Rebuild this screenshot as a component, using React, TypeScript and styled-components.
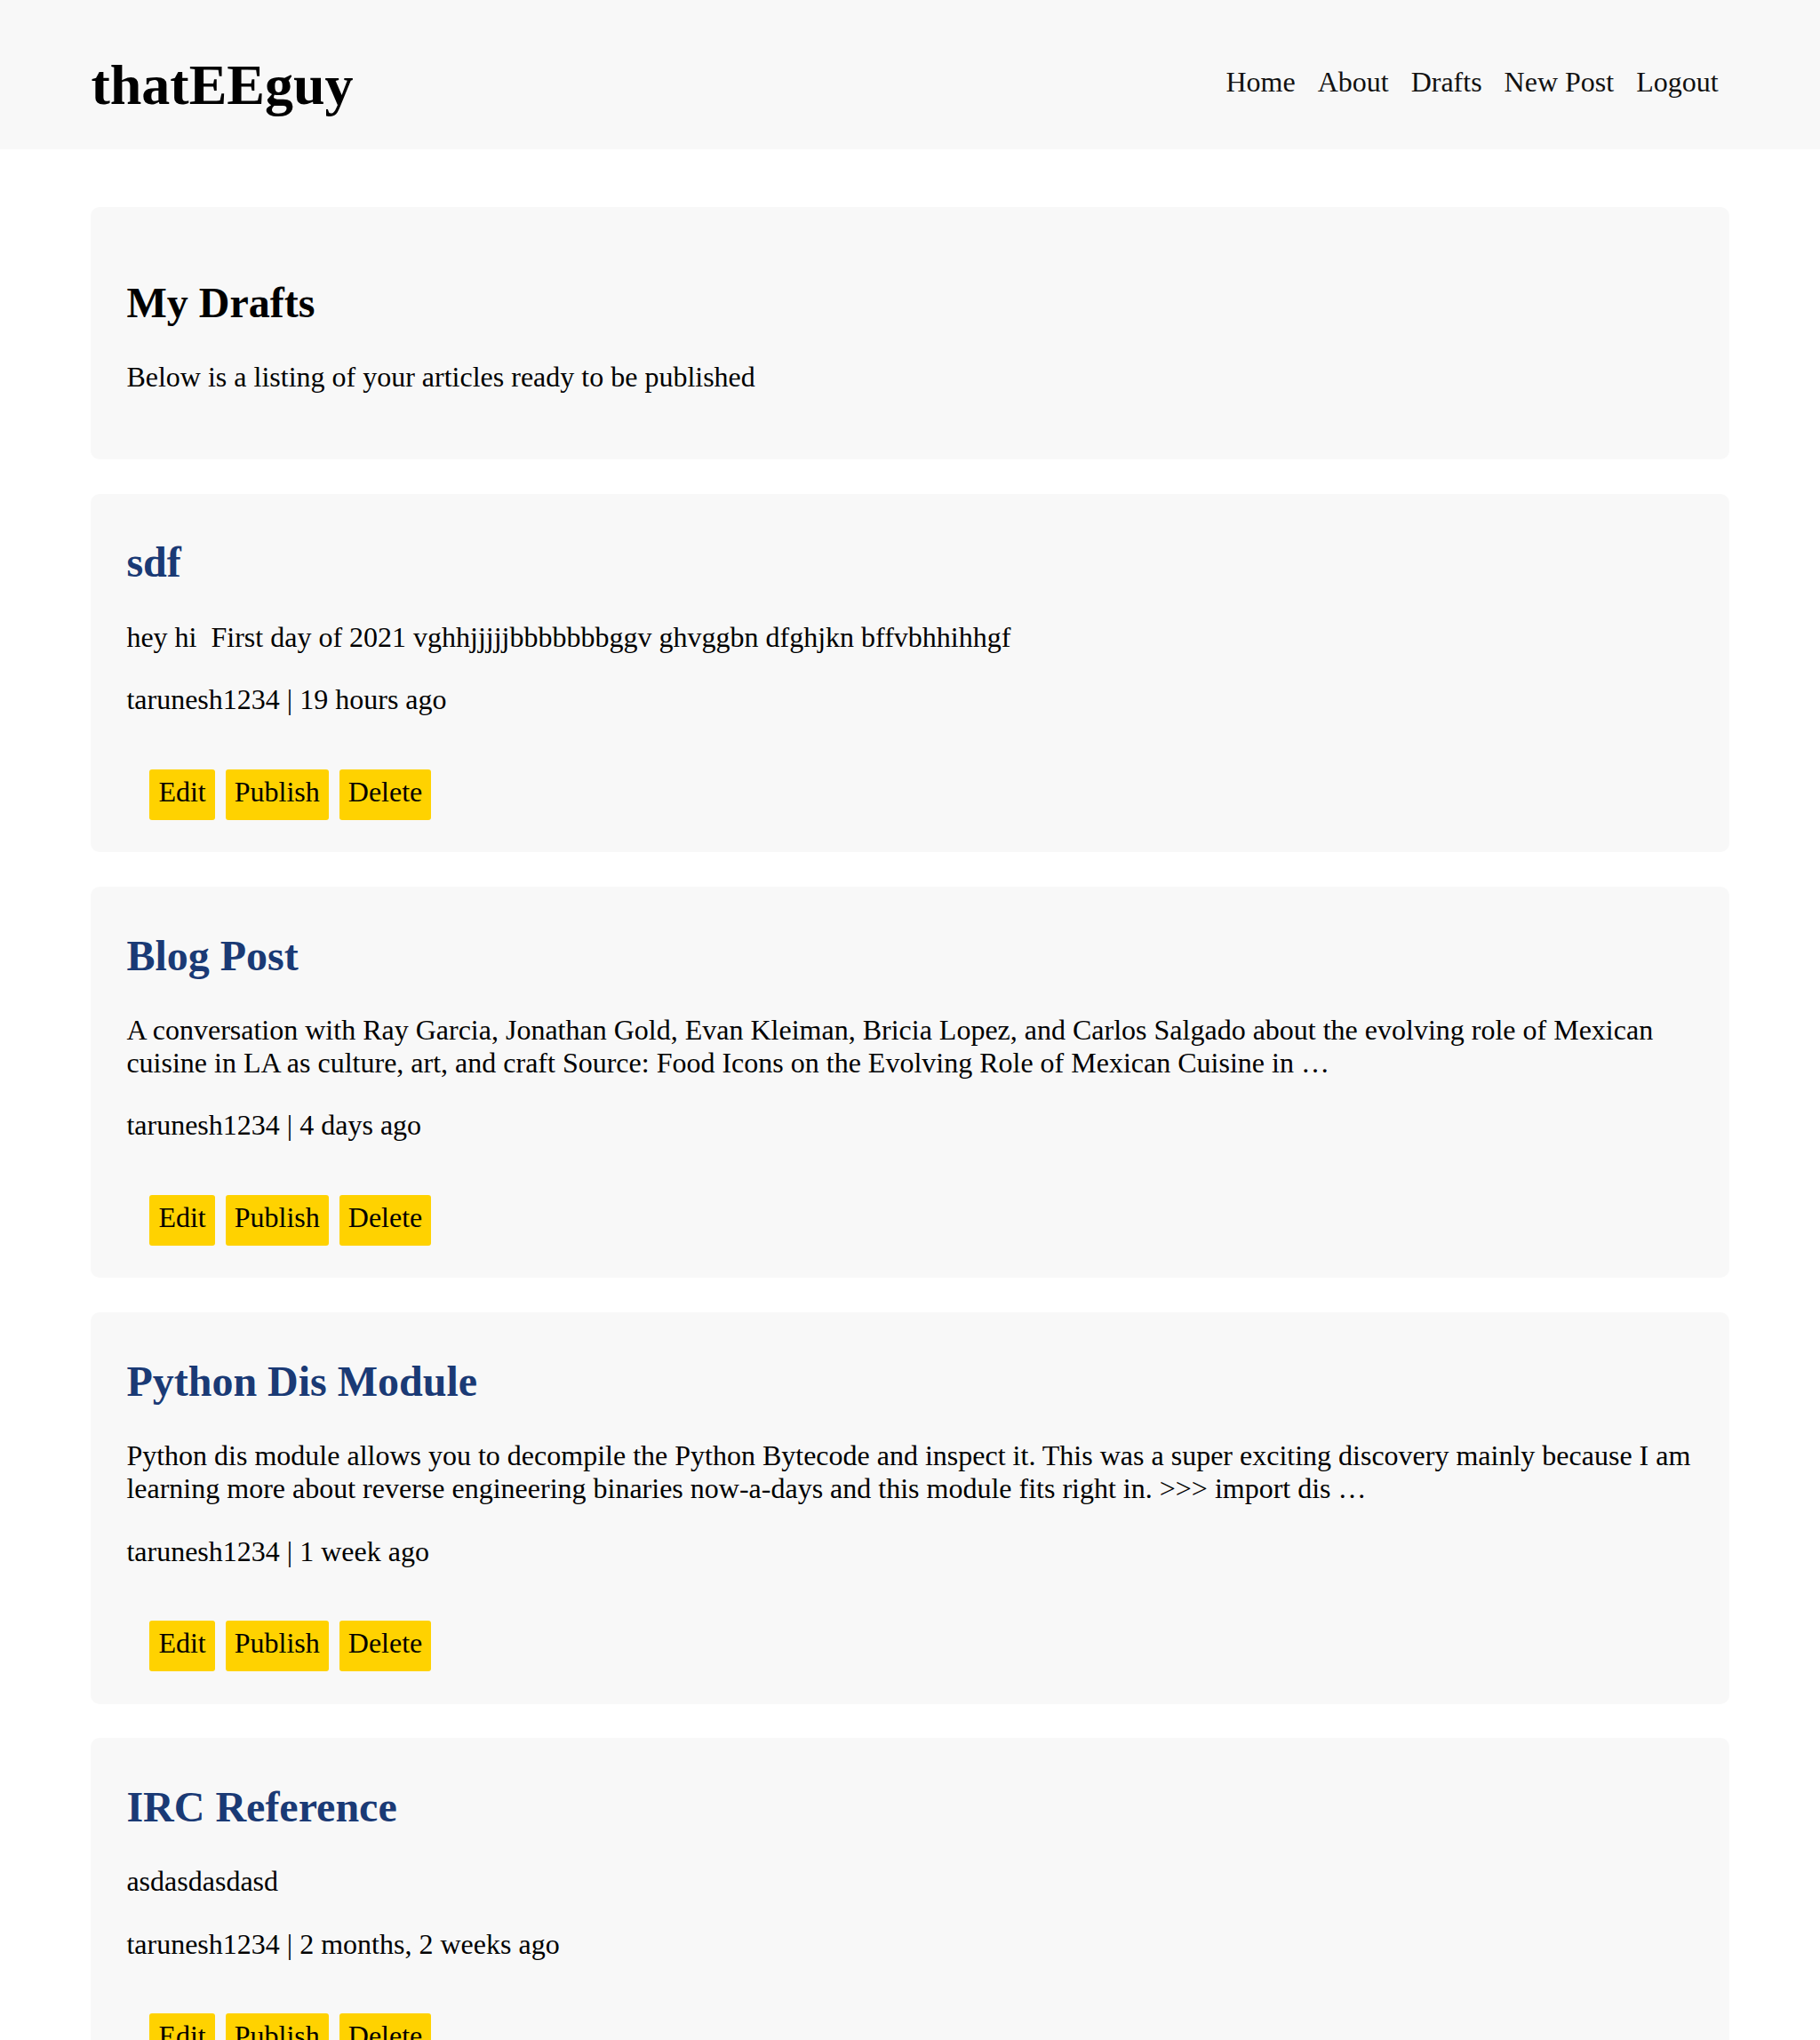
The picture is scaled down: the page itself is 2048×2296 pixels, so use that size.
import React from "react";
import styled, { createGlobalStyle } from "styled-components";

const GlobalStyle = createGlobalStyle`
  html, body {
    margin: 0;
    padding: 0;
    background: #ffffff;
    font-family: "Liberation Serif", "Times New Roman", serif;
    font-size: 32px;
    color: #000000;
  }
  ::-webkit-scrollbar { display: none; }
  * { box-sizing: border-box; }
`;

const Header = styled.header`
  background: #f8f8f8;
  height: 168px;
`;

const HeaderInner = styled.div`
  width: 90%;
  margin: 0 auto;
  display: flex;
  justify-content: space-between;
  align-items: flex-start;
`;

const Logo = styled.a`
  display: block;
  margin-top: 59px;
  font-family: "Liberation Serif", "Times New Roman", serif;
  font-weight: bold;
  font-size: 64px;
  line-height: normal;
  color: #000;
  text-decoration: none;
`;

const Nav = styled.nav`
  display: flex;
  gap: 25px;
  margin-top: 74px;
  padding-right: 12px;
`;

const NavLink = styled.a`
  font-size: 32px;
  line-height: normal;
  color: #111;
  text-decoration: none;
`;

const Main = styled.main`
  width: 90%;
  margin: 0 auto;
  padding-top: 65px;
  display: flex;
  flex-direction: column;
  gap: 38.6px;
  padding-bottom: 60px;
`;

const IntroCard = styled.section`
  background: #f8f8f8;
  border-radius: 10px;
  padding: 40px 40px 40.5px;
`;

const PostCard = styled.article`
  background: #f8f8f8;
  border-radius: 10px;
  padding: 10px 40px 36.5px;
`;

const Heading = styled.h2<{ $link?: boolean }>`
  margin: 39.8px 0 38.3px;
  font-size: 48px;
  font-weight: bold;
  line-height: normal;
  color: ${(p) => (p.$link ? "#1a3a75" : "#000")};
`;

const Text = styled.p<{ $tight?: boolean }>`
  margin: 0 0 ${(p) => (p.$tight ? "0" : "33.5px")};
  font-size: 32px;
  line-height: normal;
`;

const Actions = styled.div`
  display: flex;
  gap: 12px;
  margin: 59.5px 0 0 26px;
`;

const ActionButton = styled.a`
  display: inline-block;
  background: #ffd200;
  color: #000;
  border-radius: 3px;
  padding: 7px 10px 13px;
  font-size: 32px;
  line-height: normal;
  text-decoration: none;
`;

type Post = { title: string; body: string; author: string; when: string };

const posts: Post[] = [
  {
    title: "sdf",
    body: "hey hi \u00a0First day of 2021 vghhjjjjjbbbbbbbggv ghvggbn dfghjkn bffvbhhihhgf",
    author: "tarunesh1234",
    when: "19 hours ago",
  },
  {
    title: "Blog Post",
    body: "A conversation with Ray Garcia, Jonathan Gold, Evan Kleiman, Bricia Lopez, and Carlos Salgado about the evolving role of Mexican cuisine in LA as culture, art, and craft Source: Food Icons on the Evolving Role of Mexican Cuisine in \u2026",
    author: "tarunesh1234",
    when: "4 days ago",
  },
  {
    title: "Python Dis Module",
    body: "Python dis module allows you to decompile the Python Bytecode and inspect it. This was a super exciting discovery mainly because I am learning more about reverse engineering binaries now-a-days and this module fits right in. >>> import dis \u2026",
    author: "tarunesh1234",
    when: "1 week ago",
  },
  {
    title: "IRC Reference",
    body: "asdasdasdasd",
    author: "tarunesh1234",
    when: "2 months, 2 weeks ago",
  },
];

export default function App() {
  return (
    <>
      <GlobalStyle />
      <Header>
        <HeaderInner>
          <Logo href="#">thatEEguy</Logo>
          <Nav>
            <NavLink href="#">Home</NavLink>
            <NavLink href="#">About</NavLink>
            <NavLink href="#">Drafts</NavLink>
            <NavLink href="#">New Post</NavLink>
            <NavLink href="#">Logout</NavLink>
          </Nav>
        </HeaderInner>
      </Header>
      <Main>
        <IntroCard>
          <Heading>My Drafts</Heading>
          <Text>Below is a listing of your articles ready to be published</Text>
        </IntroCard>
        {posts.map((p) => (
          <PostCard key={p.title}>
            <Heading $link>{p.title}</Heading>
            <Text>{p.body}</Text>
            <Text $tight>
              {p.author} | {p.when}
            </Text>
            <Actions>
              <ActionButton href="#">Edit</ActionButton>
              <ActionButton href="#">Publish</ActionButton>
              <ActionButton href="#">Delete</ActionButton>
            </Actions>
          </PostCard>
        ))}
      </Main>
    </>
  );
}
